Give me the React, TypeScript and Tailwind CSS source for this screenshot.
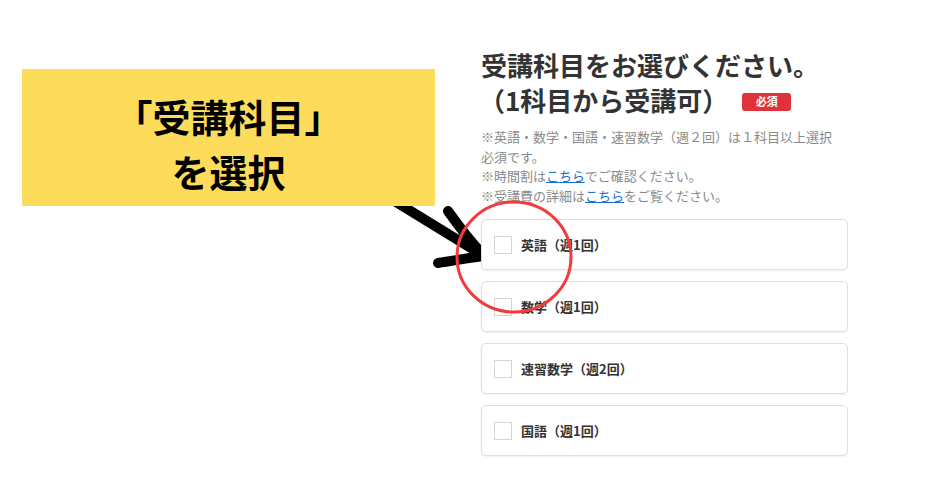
import React from "react";

const subjects = ["英語（週1回）", "数学（週1回）", "速習数学（週2回）", "国語（週1回）"];

const jp = { fontFamily: '"Noto Sans CJK JP", "Noto Sans", sans-serif' };

function Callout() {
  return (
    <div className="relative z-10 mt-[69px] ml-[22px] flex h-[137px] w-[413px] flex-col items-center justify-center bg-[#fddc5c] pt-[10px] text-[38px] font-bold leading-[55px] text-black">
      <div>「受講科目」</div>
      <div>を選択</div>
    </div>
  );
}

function SubjectCard({ label }: { label: string }) {
  return (
    <label className="flex h-[51px] items-center gap-[9px] rounded-[5px] border border-[#dedede] bg-white pl-[12px] shadow-[0_1px_2px_rgba(0,0,0,0.06)]">
      <span className="h-[18px] w-[18px] border border-[#d4d4d4] bg-white" />
      <span className="text-[13px] font-bold text-[#333]">{label}</span>
    </label>
  );
}

function Overlay() {
  return (
    <svg className="pointer-events-none absolute inset-0 z-0" width="940" height="486">
      <g stroke="#000" strokeWidth="10" strokeLinecap="round" fill="none">
        <path d="M396 202 L484 256" />
        <path d="M448 211 C460 228 472 243 484 256" />
        <path d="M438 263 C452 261 468 258 483 256" />
      </g>
    </svg>
  );
}

function Circle() {
  return (
    <svg className="pointer-events-none absolute inset-0 z-20" width="940" height="486">
      <ellipse cx="514" cy="257" rx="57" ry="55" fill="none" stroke="#f33b3b" strokeWidth="3" />
    </svg>
  );
}

export default function App() {
  return (
    <div className="relative h-[486px] w-[940px] overflow-hidden bg-white" style={jp}>
      <Overlay />
      <div className="flex">
        <Callout />
        <div className="relative z-10 ml-[46px] w-[367px] pt-[47px]">
          <h2 className="text-[26px] font-bold leading-[35px] text-[#333]">
            受講科目をお選びください。
            <br />
            <span className="ml-[-2px]">（1科目から受講可）</span>
            <span className="ml-[14px] inline-flex h-[18px] w-[49px] translate-y-[-2px] items-center justify-center rounded-[3px] bg-[#e0323a] align-middle text-[11px] font-bold leading-none text-white">
              必須
            </span>
          </h2>
          <div className="mt-[10px] text-[13px] leading-[19.5px] text-[#8a8a8a]">
            <p>
              ※英語・数学・国語・速習数学（週２回）は１科目以上選択
              <br />
              必須です。
            </p>
            <p>
              ※時間割は<a className="text-[#1a6fd0] underline">こちら</a>でご確認ください。
            </p>
            <p>
              ※受講費の詳細は<a className="text-[#1a6fd0] underline">こちら</a>をご覧ください。
            </p>
          </div>
          <div className="mt-[14px] flex flex-col gap-[11px]">
            {subjects.map((s) => (
              <SubjectCard key={s} label={s} />
            ))}
          </div>
        </div>
      </div>
      <Circle />
    </div>
  );
}
